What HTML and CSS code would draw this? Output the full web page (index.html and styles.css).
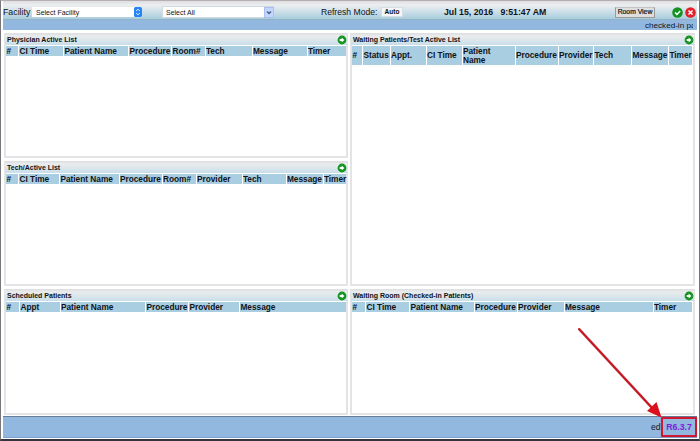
FILE: index.html
```
<!DOCTYPE html>
<html lang="en">
<head>
<meta charset="utf-8">
<title>Patient Tracking</title>
<link rel="stylesheet" href="styles.css">
</head>
<body>
<svg class="defs" width="0" height="0" aria-hidden="true">
  <symbol id="go" viewBox="0 0 10 10"><circle cx="5" cy="5" r="4.4" fill="#159321"/><path d="M2.7 3.900h2V2.4L7.4 5 4.7 7.6V6.100H2.7z" fill="#fff"/></symbol>
</svg>
<div class="app">
  <header class="topbar">
    <span class="facility">Facility</span>
    <div class="select first"><span>Select Facility</span><svg class="stepper" viewBox="0 0 8 10"><rect width="8" height="10" rx="1.5" fill="#2684f5"/><path d="M2.2 4 4 2.2 5.8 4M2.2 6 4 7.8 5.8 6" fill="none" stroke="#fff" stroke-width=".9"/></svg></div>
    <div class="select second"><span>Select All</span><svg class="drop" viewBox="0 0 10 11"><rect x=".5" y=".5" width="9" height="10" fill="#c3d6fb" stroke="#a9c0ee"/><path d="M3 4.5 5 6.5 7 4.5" fill="none" stroke="#46608e" stroke-width="1.3"/></svg></div>
    <span class="refresh">Refresh Mode:</span>
    <button class="auto">Auto</button>
    <span class="clock">Jul 15, 2016 &nbsp; 9:51:47 AM</span>
    <button class="room">Room View</button>
    <svg class="status" viewBox="0 0 11 11"><circle cx="5.5" cy="5.5" r="5.3" fill="#159321"/><path d="M3 5.5 4.9 7.4 8.2 3.9" fill="none" stroke="#fff" stroke-width="1.5"/></svg>
    <svg class="status" viewBox="0 0 11 11"><circle cx="5.5" cy="5.5" r="5.3" fill="#e5202b"/><path d="m3.5 3.5 4 4m0-4-4 4" stroke="#fff" stroke-width="1.5"/></svg>
  </header>
  <div class="ticker"><span>checked-in pa</span></div>
  <main class="board">
    <div class="column left">
      <section class="panel physician">
        <h2>Physician Active List<svg><use href="#go"/></svg></h2>
        <div class="cols"><b>#</b><b>CI Time</b><b>Patient Name</b><b>Procedure</b><b>Room#</b><b>Tech</b><b>Message</b><b>Timer</b></div>
      </section>
      <section class="panel tech">
        <h2>Tech/Active List<svg><use href="#go"/></svg></h2>
        <div class="cols"><b>#</b><b>CI Time</b><b>Patient Name</b><b>Procedure</b><b>Room#</b><b>Provider</b><b>Tech</b><b>Message</b><b>Timer</b></div>
      </section>
      <section class="panel scheduled">
        <h2>Scheduled Patients<svg><use href="#go"/></svg></h2>
        <div class="cols"><b>#</b><b>Appt</b><b>Patient Name</b><b>Procedure</b><b>Provider</b><b>Message</b></div>
      </section>
    </div>
    <div class="column right">
      <section class="panel waiting">
        <h2>Waiting Patients/Test Active List<svg><use href="#go"/></svg></h2>
        <div class="cols"><b>#</b><b>Status</b><b>Appt.</b><b>CI Time</b><b>Patient<br>Name</b><b>Procedure</b><b>Provider</b><b>Tech</b><b>Message</b><b>Timer</b></div>
      </section>
      <section class="panel checked">
        <h2>Waiting Room (Checked-in Patients)<svg><use href="#go"/></svg></h2>
        <div class="cols"><b>#</b><b>CI Time</b><b>Patient Name</b><b>Procedure</b><b>Provider</b><b>Message</b><b>Timer</b></div>
      </section>
    </div>
  </main>
  <footer class="footer"><span class="tail">ed</span><span class="version">R6.3.7</span></footer>
</div>
<svg class="arrow" viewBox="0 0 90 92"><path d="m3.5 3.5 74 80" stroke="#8d4a50" stroke-opacity=".35" stroke-width="3" stroke-linecap="round"/><path d="m3 3 74 80" stroke="#c9141f" stroke-width="2" stroke-linecap="round"/><path d="m85.500 91.500-14.500-6.500 9.500-9z" fill="#dc101d"/></svg>
</body>
</html>
```

FILE: styles.css
```
* { box-sizing: border-box; }
body {
  margin: 0;
  width: 700px;
  height: 441px;
  overflow: hidden;
  background: #fff;
  color: #101318;
  font-family: "Liberation Sans", Arial, sans-serif;
}
.defs { position: absolute; }
.app {
  display: flex;
  flex-direction: column;
  height: 441px;
  padding: 0 2px 0 2px;
  border: 1px solid #77777b;
  border-top-color: #b5aeb3;
  border-bottom: 2px solid #34343d;
}
.topbar {
  display: flex;
  align-items: center;
  flex: none;
  height: 19px;
  padding-top: 3px;
  background: linear-gradient(#dedee0 0, #eceef0 4px, #d4e3eb 9px, #a9cddd 18px, #7899ad 19px);
  font-size: 8.8px;
  white-space: nowrap;
}
.facility { width: 29px; }
.select {
  display: flex;
  align-items: center;
  justify-content: space-between;
  background: #fff;
  font-size: 7px;
}
.first { width: 110px; height: 10px; padding-left: 4px; }
.second { width: 112px; height: 12px; margin-left: 20px; padding-left: 3px; border: 1px solid #cfdae1; border-right: 0; }
.stepper { width: 8px; height: 10px; }
.drop { width: 10px; height: 11px; }
.refresh { width: 60px; margin-left: 47px; padding-bottom: 1px; font-size: 8.6px; }
button {
  padding: 0;
  border: 1px solid #d4dfe4;
  background: #f3f5f6;
  color: #111;
  font-family: inherit;
  font-size: 6.5px;
  line-height: 8px;
}
.auto { width: 22px; height: 10px; font-weight: bold; }
.clock { width: 112px; margin-left: 41px; padding-bottom: 1px; font-size: 8.75px; font-weight: bold; }
.room { width: 40px; height: 11px; margin-left: 59px; border-color: #999; border-top-color: #c4c4c4; background: #dedede; font-size: 6.8px; -webkit-text-stroke: .2px #111; }
.status { width: 11px; height: 11px; margin-left: 2px; }
.room + .status { margin-left: 17px; }
.ticker {
  display: flex;
  justify-content: flex-end;
  flex: none;
  height: 10px;
  padding-right: 4px;
  background: #93b8df;
  font-size: 8.1px;
  line-height: 12px;
}
.ticker span { width: 48px; overflow: hidden; white-space: nowrap; }
.board {
  display: grid;
  grid-template-columns: 344px 345px;
  gap: 2px;
  height: 382px;
  flex: none;
  margin: 3px 0 0 1px;
}
.column { display: grid; gap: 3px; }
.left { grid-template-rows: 125px 125px 126px; }
.right { grid-template-rows: 253px 126px; }
.panel { border: 2px solid #e4e4e6; border-top: 0; background: #fff; min-width: 0; }
h2 {
  display: flex;
  align-items: center;
  justify-content: space-between;
  height: 12px;
  margin: 0 -1px 1px;
  padding: 1px 0 0 2px;
  background: linear-gradient(#dcdcde 0, #e9eced 3px, #c9dfe9 12px);
  font-size: 7px;
  line-height: 10px;
  white-space: nowrap;
}
h2 svg { width: 10px; height: 10px; }
.cols { display: grid; gap: 1px; height: 10px; }
.cols b { display: flex; align-items: center; padding-left: .4px; background: #a9cde1; font-size: 8.3px; line-height: 9px; white-space: nowrap; }
.physician .cols { grid-template-columns: 12px 44px 64px 42px 32.500px 46px 54px 38px; }
.tech .cols { grid-template-columns: 12px 40px 58.500px 42px 33px 45px 43px 36px 22.500px; }
.scheduled .cols { grid-template-columns: 13px 39.500px 84.500px 42px 50px 106px; }
.waiting .cols { height: 19px; grid-template-columns: 10px 26.500px 35px 35px 52px 42px 34.500px 37px 36px 23px; }
.checked .cols { grid-template-columns: 13px 43px 63.500px 42px 46px 88px 38.500px; }
.footer {
  display: flex;
  align-items: center;
  justify-content: flex-end;
  flex: none;
  height: 22px;
  margin-top: 1px;
  border-top: 1px solid #687e98;
  border-bottom: 1px solid #79a3d1;
  background: #93b8df;
}
.tail { width: 10px; overflow: hidden; font-size: 8.6px; }
.version {
  width: 36px;
  height: 20px;
  border: 2px solid #cf1730;
  border-radius: 1px;
  color: #7d1bd8;
  font-size: 8.7px;
  font-weight: bold;
  line-height: 16px;
  text-align: center;
  box-shadow: 0 0 1px #8e3d62;
}
.arrow { position: absolute; left: 576px; top: 326px; width: 90px; height: 92px; }
```
